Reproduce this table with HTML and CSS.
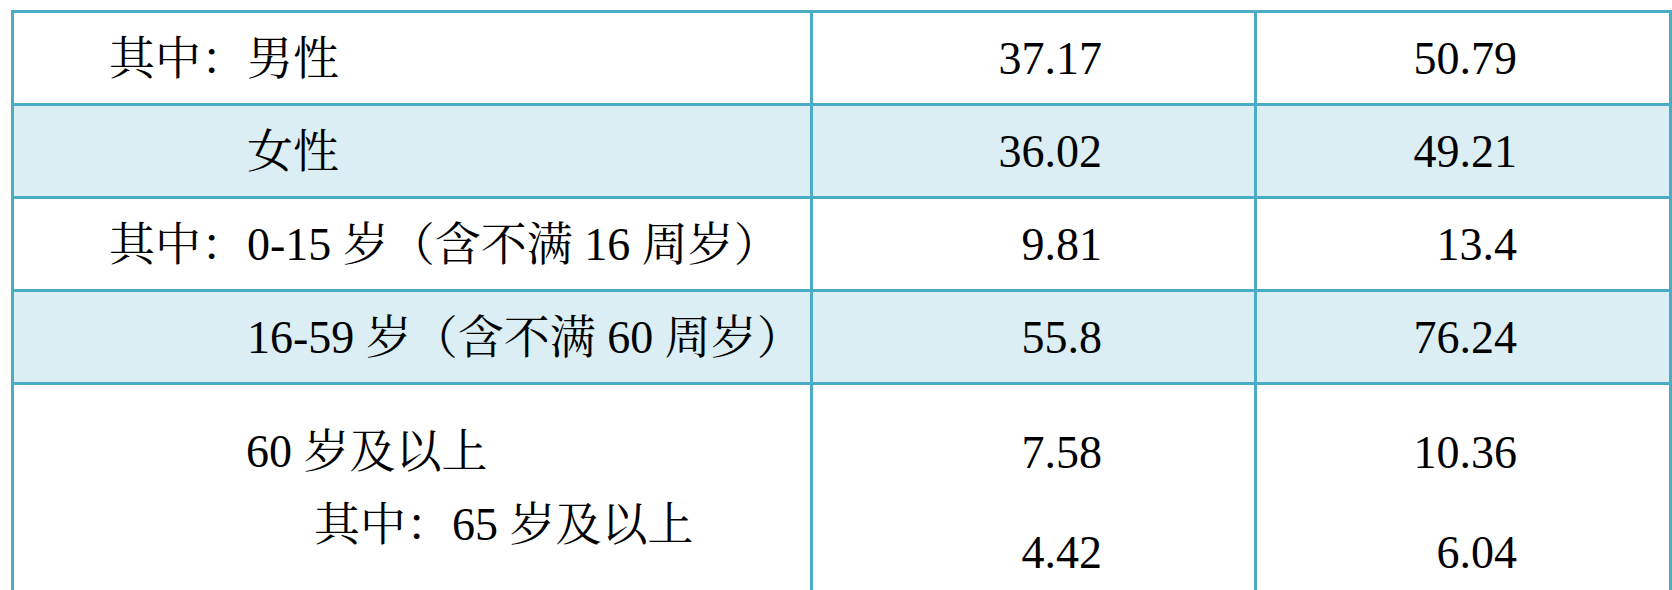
FILE: index.html
```html
<!DOCTYPE html>
<html>
<head>
<meta charset="utf-8">
<title>人口构成</title>
<link rel="stylesheet" href="styles.css">
</head>
<body>
<div class="tbl">
  <div class="td td-label"><span class="tx">其中：男性</span></div>
  <div class="td td-num"><span class="tx">37.17</span></div>
  <div class="td td-num"><span class="tx">50.79</span></div>

  <div class="td td-label td-indent td-band"><span class="tx">女性</span></div>
  <div class="td td-num td-band"><span class="tx">36.02</span></div>
  <div class="td td-num td-band"><span class="tx">49.21</span></div>

  <div class="td td-label"><span class="tx">其中：0-15 岁（含不满 16 周岁）</span></div>
  <div class="td td-num"><span class="tx">9.81</span></div>
  <div class="td td-num"><span class="tx">13.4</span></div>

  <div class="td td-label td-indent td-band"><span class="tx">16-59 岁（含不满 60 周岁）</span></div>
  <div class="td td-num td-band"><span class="tx">55.8</span></div>
  <div class="td td-num td-band"><span class="tx">76.24</span></div>

  <div class="td td-label td-last">
    <div class="tline tline-a"><span class="tx">60 岁及以上</span></div>
    <div class="tline tline-b"><span class="tx">其中：65 岁及以上</span></div>
  </div>
  <div class="td td-num td-last">
    <div class="nrow"><span class="tx">7.58</span></div>
    <div class="nrow"><span class="tx">4.42</span></div>
  </div>
  <div class="td td-num td-last">
    <div class="nrow"><span class="tx">10.36</span></div>
    <div class="nrow"><span class="tx">6.04</span></div>
  </div>
</div>
</body>
</html>
```

FILE: styles.css
```css
html, body {
  background: #ffffff;
  overflow: hidden;
}

body {
  margin: 10px 0 0 11px;
  font-size: 46px;
  font-family: "Liberation Serif", "Noto Serif CJK SC", "Noto Sans CJK SC", serif;
}

.tx {
  font-family: "Liberation Serif", "Noto Serif CJK SC", "Noto Sans CJK SC", serif;
  font-size: 46px;
  color: #000;
  text-spacing-trim: space-all;
  text-autospace: no-autospace;
}

.tbl {
  display: grid;
  grid-template-columns: 799px 444px 415px;
  grid-template-rows: 93px 93px 93px 93px 205px;
  width: max-content;
  border-top: 3px solid #4bacc6;
  border-left: 3px solid #4bacc6;
}

.td {
  box-sizing: border-box;
  border-right: 3px solid #4bacc6;
  border-bottom: 3px solid #4bacc6;
  display: flex;
  align-items: center;
  line-height: 56px;
  padding-top: 2px;
}

.td-band {
  background: #daeef3;
}

.td-label {
  padding-left: 95px;
}

.td-indent {
  padding-left: 233px;
}

.td-num {
  justify-content: flex-end;
  padding-right: 152px;
}

.td-last {
  border-bottom: none;
  flex-direction: column;
  align-items: stretch;
  justify-content: flex-start;
}

.td-label.td-last {
  padding-left: 0;
  padding-top: 30px;
}

.tline {
  line-height: 73px;
}

.tline-a {
  padding-left: 232px;
}

.tline-b {
  padding-left: 300px;
}

.td-num.td-last {
  padding-top: 18px;
}

.nrow {
  line-height: 100px;
  text-align: right;
}
```
